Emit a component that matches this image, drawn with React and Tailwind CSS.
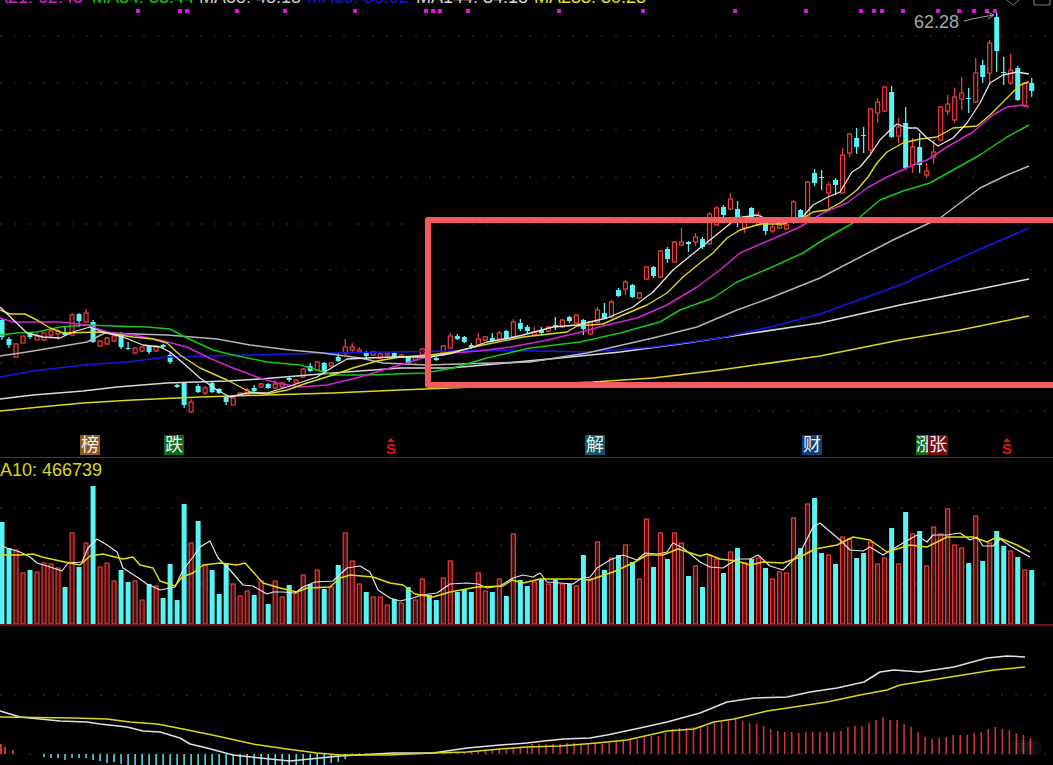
import React from 'react';

const FONT = "font-['Liberation_Sans','Noto_Sans_CJK_SC',sans-serif]";

// x centre of bar i, everything below is in page pixels
const barX = (i) => 7.005 * i + 2;

// colour + top of volume bar
const volume = [
  ['c', 522], ['c', 548], ['r', 550], ['r', 573], ['c', 570], ['r', 572], ['r', 563], ['r', 564], ['r', 568], ['c', 587],
  ['r', 533], ['c', 567], ['r', 543], ['c', 486], ['r', 567], ['r', 563], ['r', 581], ['c', 570], ['c', 582], ['r', 581],
  ['r', 600], ['c', 584], ['r', 586], ['c', 598], ['c', 564], ['c', 600], ['c', 504], ['r', 543], ['c', 521], ['r', 565],
  ['c', 570], ['c', 594], ['c', 563], ['r', 584], ['r', 596], ['r', 591], ['c', 595], ['r', 581], ['c', 604], ['r', 581],
  ['r', 597], ['c', 585], ['r', 593], ['r', 575], ['c', 584], ['r', 570], ['c', 589], ['r', 587], ['c', 565], ['r', 533],
  ['r', 561], ['r', 584], ['c', 592], ['r', 597], ['r', 597], ['r', 605], ['c', 599], ['r', 603], ['c', 587], ['r', 600],
  ['r', 579], ['c', 595], ['c', 600], ['r', 578], ['r', 561], ['c', 592], ['c', 589], ['c', 592], ['r', 573], ['r', 591],
  ['c', 592], ['r', 579], ['c', 596], ['r', 534], ['c', 580], ['c', 586], ['r', 582], ['c', 579], ['r', 584], ['c', 579],
  ['r', 584], ['c', 584], ['r', 586], ['c', 555], ['r', 579], ['r', 542], ['c', 570], ['r', 558], ['c', 555], ['r', 545],
  ['c', 562], ['r', 579], ['r', 519], ['c', 567], ['r', 533], ['c', 559], ['r', 533], ['r', 543], ['c', 576], ['r', 566],
  ['c', 587], ['r', 555], ['r', 559], ['c', 573], ['r', 552], ['c', 548], ['r', 563], ['c', 559], ['r', 558], ['c', 568],
  ['r', 579], ['r', 572], ['r', 573], ['r', 518], ['c', 548], ['r', 504], ['c', 498], ['c', 553], ['r', 555], ['c', 564],
  ['r', 537], ['r', 539], ['c', 558], ['c', 553], ['r', 542], ['r', 564], ['r', 558], ['c', 528], ['r', 564], ['c', 512],
  ['r', 534], ['c', 531], ['r', 566], ['r', 527], ['r', 534], ['r', 509], ['r', 545], ['r', 548], ['c', 563], ['r', 516],
  ['c', 561], ['r', 543], ['c', 531], ['c', 546], ['r', 551], ['c', 557], ['r', 570], ['c', 570],
];

// body top, body bottom, high, low
const candles = [
  [320, 337, 318, 340], [339, 345, 337, 348], [344, 357, 343, 358], [336, 343, 336, 343], [333, 337, 332, 339],
  [336, 340, 333, 340], [333, 340, 333, 341], [331, 335, 329, 337], [331, 334, 329, 340], [332, 335, 327, 336],
  [315, 335, 313, 336], [314, 321, 313, 327], [313, 322, 309, 323], [322, 342, 320, 343], [341, 346, 340, 347],
  [338, 344, 337, 345], [336, 341, 333, 342], [333, 347, 332, 349], [348, 349, 342, 350], [348, 353, 347, 354],
  [347, 351, 346, 352], [346, 352, 346, 354], [346, 351, 345, 352], [345, 347, 344, 349], [355, 362, 352, 364],
  [385, 387, 384, 388], [383, 405, 383, 408], [402, 412, 399, 413], [386, 392, 384, 393], [388, 393, 386, 395],
  [383, 392, 382, 393], [389, 393, 388, 394], [397, 402, 396, 405], [398, 405, 397, 405], [393, 395, 392, 396],
  [390, 395, 388, 396], [388, 391, 385, 392], [384, 387, 383, 388], [384, 388, 383, 389], [384, 388, 380, 389],
  [383, 387, 382, 388], [378, 380, 376, 382], [380, 383, 379, 384], [369, 377, 368, 378], [366, 371, 363, 372],
  [362, 370, 361, 371], [363, 371, 362, 372], [363, 366, 362, 367], [357, 361, 353, 362], [347, 353, 339, 355],
  [347, 350, 343, 352], [350, 352, 347, 353], [352, 356, 351, 359], [352, 355, 351, 356], [354, 358, 353, 359],
  [353, 355, 352, 356], [353, 357, 352, 358], [355, 357, 354, 358], [357, 363, 356, 364], [357, 360, 356, 361],
  [349, 355, 348, 356], [355, 358, 354, 359], [358, 360, 357, 361], [346, 355, 345, 356], [336, 348, 333, 349],
  [336, 339, 334, 340], [337, 342, 336, 343], [345, 347, 343, 349], [339, 345, 333, 346], [337, 340, 336, 341],
  [338, 341, 333, 342], [333, 339, 331, 340], [331, 339, 330, 340], [322, 337, 319, 338], [323, 329, 319, 331],
  [327, 331, 325, 333], [332, 335, 327, 336], [330, 333, 327, 334], [327, 331, 326, 332], [325, 326, 317, 330],
  [320, 327, 319, 328], [317, 321, 316, 323], [315, 323, 314, 324], [320, 329, 319, 335], [322, 334, 321, 335],
  [310, 322, 307, 323], [313, 318, 303, 319], [302, 317, 300, 318], [290, 296, 288, 297], [282, 289, 280, 295],
  [285, 297, 284, 298], [293, 298, 292, 299], [267, 279, 266, 280], [267, 276, 266, 278], [251, 277, 250, 278],
  [249, 259, 247, 263], [242, 262, 241, 263], [242, 245, 228, 246], [242, 244, 241, 252], [237, 242, 233, 246],
  [239, 247, 237, 249], [214, 244, 212, 245], [208, 225, 206, 226], [207, 215, 205, 218], [199, 209, 193, 210],
  [209, 220, 201, 227], [217, 228, 216, 233], [208, 218, 207, 220], [215, 225, 212, 226], [223, 231, 222, 235],
  [227, 231, 225, 233], [225, 228, 224, 229], [225, 229, 224, 230], [202, 222, 200, 224], [210, 218, 209, 219],
  [182, 217, 181, 218], [173, 183, 169, 186], [177, 178, 170, 190], [185, 193, 182, 208], [180, 185, 178, 195],
  [155, 193, 148, 194], [134, 153, 133, 157], [138, 147, 128, 154], [135, 136, 127, 153], [109, 150, 108, 155],
  [102, 113, 98, 123], [87, 111, 86, 112], [92, 137, 86, 138], [127, 136, 118, 143], [123, 168, 107, 170],
  [147, 165, 138, 173], [147, 165, 133, 173], [171, 175, 163, 178], [152, 157, 140, 164], [107, 140, 106, 141],
  [104, 111, 95, 115], [97, 120, 88, 123], [93, 99, 77, 110], [98, 99, 88, 113], [73, 102, 58, 103],
  [65, 77, 60, 83], [43, 73, 40, 83], [17, 51, 13, 72], [72, 73, 57, 85], [70, 83, 54, 85],
  [68, 100, 66, 101], [83, 106, 82, 107], [83, 91, 78, 97],
];

const maLines = [
  ['#d8d81c', 1.5, '0,411 40,407 83,403 133,400 200,397 267,395 333,393 400,390 450,388 593,382 653,378 720,370 820,356 900,340 960,330 1029,316'],
  ['#d8d8d8', 1.6, '0,399 33,395 83,391 117,387 167,383 227,381 260,379 333,373 400,368 450,368 507,363 560,358 620,352 687,343 753,333 820,323 900,305 960,293 1029,279'],
  ['#1616e0', 1.7, '0,377 33,371 83,365 127,362 167,357 250,355 333,353 450,351 487,350 587,352 653,347 720,338 770,327 820,314 900,285 960,258 1029,228'],
  ['#b4b4b4', 1.5, '0,356 27,352 57,347 87,342 105,333 167,335 217,339 250,345 290,350 323,353 360,358 383,363 427,365 460,364 530,362 587,353 653,338 697,327 737,310 770,298 820,278 893,240 940,218 980,188 1007,175 1029,166'],
  ['#14c814', 1.5, '0,335 17,333 37,332 60,327 87,325 113,326 147,327 170,329 187,338 213,350 233,355 267,362 300,365 333,375 367,375 425,373 453,368 487,358 530,348 580,342 620,333 660,322 680,310 713,298 737,282 770,268 803,253 823,240 853,223 880,200 903,191 930,183 953,170 980,155 1007,137 1029,125'],
  ['#d024d0', 1.5, '0,318 13,322 60,322 87,325 107,332 133,335 160,340 187,347 207,357 233,368 257,377 277,383 300,387 327,385 360,377 393,367 430,356 453,353 480,351 510,347 543,341 577,333 607,325 637,318 667,305 697,287 720,270 740,253 770,240 800,227 823,213 847,203 867,188 887,177 913,165 927,160 947,147 973,132 993,115 1007,107 1023,105 1029,107'],
  ['#dcd820', 1.4, '0,310 10,314 25,314 37,320 50,328 63,333 100,332 133,337 153,339 167,343 180,355 200,368 227,380 250,392 267,394 287,390 307,383 333,375 353,368 377,361 400,357 430,355 453,352 483,345 523,337 567,332 577,326 603,324 623,315 647,305 667,293 683,277 700,263 713,253 727,238 740,230 760,224 783,224 805,217 813,212 827,210 840,203 857,190 868,177 877,163 887,152 903,143 920,139 937,137 953,128 977,126 990,115 1007,98 1020,85 1029,82'],
  ['#e4e4e4', 1.3, '0,307 27,333 43,337 60,338 73,332 90,327 103,332 123,337 143,345 160,347 170,352 183,363 200,378 217,390 230,397 247,393 267,393 287,387 317,377 333,367 347,359 367,358 393,357 430,357 453,353 470,348 487,342 510,338 523,335 553,327 577,325 607,318 633,307 653,292 673,270 700,248 720,232 737,218 757,215 777,223 800,220 813,205 828,197 840,192 852,172 860,167 870,155 880,140 890,130 897,124 907,128 917,128 927,138 938,146 953,138 967,123 980,103 990,83 1003,75 1017,72 1029,74'],
];

const volWhite = '0,545 7,548 20,552 30,557 37,563 50,567 62,571 68,563 82,562 88,548 97,539 107,545 117,552 123,568 137,577 147,584 160,590 175,587 183,570 193,557 200,547 210,541 218,558 230,570 243,585 253,586 267,594 273,592 283,592 295,593 303,587 315,582 333,581 347,568 360,566 370,572 378,590 390,598 400,601 413,598 422,595 437,593 450,584 467,583 478,584 487,588 500,586 513,578 523,575 533,577 540,573 547,582 573,584 582,578 590,577 597,568 610,560 623,555 637,560 645,553 658,554 667,552 673,543 683,548 700,562 710,567 723,568 737,559 750,559 758,555 770,566 783,570 800,553 813,527 820,523 840,540 850,550 863,551 870,547 883,555 903,543 917,535 927,542 933,535 947,535 960,533 970,540 977,537 983,546 993,546 1000,539 1012,547 1030,557';
const volYellow = '0,555 20,555 33,554 42,557 60,561 80,565 90,556 103,554 123,559 133,557 140,565 153,568 160,581 175,586 182,577 193,573 203,565 220,563 237,565 245,563 263,583 280,588 297,592 307,588 330,587 340,578 350,575 373,577 390,583 403,585 415,594 433,597 450,592 477,587 503,586 512,580 523,583 540,579 577,579 590,580 613,572 633,563 647,555 663,555 678,549 700,556 707,554 720,559 737,561 750,565 763,562 783,563 800,557 815,549 837,545 853,537 870,540 887,552 900,548 910,545 927,547 947,537 973,537 987,542 997,537 1017,545 1030,552';

const macdWhite = '0,711 10,714 20,717 60,721 87,722 100,724 127,727 143,731 160,732 180,738 190,744 207,748 233,755 260,758 290,761 320,758 340,756 393,753 433,753 467,748 500,745 527,743 544,741 564,739 590,738 607,735 640,728 667,722 700,713 727,702 754,698 787,697 810,692 837,688 864,682 880,672 894,670 920,672 954,667 987,658 1007,656 1025,657';
const macdYellow = '0,717 73,718 107,719 130,722 157,724 183,729 217,736 253,744 287,749 317,753 340,755 387,755 433,753 467,752 500,749 527,747 560,746 597,743 627,740 667,731 694,729 714,722 734,719 767,711 794,707 827,702 860,695 887,690 900,685 944,678 994,670 1025,667';

// MACD stems: tops of the red ones on the right, read off left to right
const macdTops = [744, 744, 744, 744, 744, 743, 743, 744, 743, 743, 744, 743, 742, 740, 740, 739, 737, 736, 736, 733, 729, 728, 728, 727, 727, 726, 723, 722, 721, 719, 721, 723, 724, 726, 729, 731, 732, 732, 733, 732, 732, 732, 732, 732, 731, 727, 726, 726, 723, 720, 717, 720, 720, 724, 727, 732, 737, 739, 738, 737, 735, 735, 735, 733, 732, 729, 727, 729, 730, 733, 735, 738];
const macdCyan = [
  [6, 3], [7, 4], [8, 4], [9, 6], [10, 4], [11, 4], [12, 4], [13, 6], [14, 7], [15, 9], [16, 8], [17, 10],
  ...Array.from({ length: 29 }, (_, k) => [18 + k, 12]),
  [47, 9], [48, 8], [49, 5],
];

const Grid = ({ rows }) =>
  rows.map((y) => (
    <line key={y} x1="0" x2="1053" y1={y} y2={y} stroke="#8c1414" strokeWidth="1.2" strokeDasharray="2 12.3" />
  ));

const Line = ({ color, width, points }) => (
  <polyline points={points} fill="none" stroke={color} strokeWidth={width} strokeLinejoin="round" />
);

const Candle = ({ i }) => {
  const [top, bot, hi, lo] = candles[i];
  const x = barX(i);
  const up = volume[i][0] === 'r';
  const color = up ? '#e83e3e' : '#55f5f5';
  return (
    <g>
      <line x1={x} x2={x} y1={hi} y2={lo} stroke={color} strokeWidth="1.3" />
      {up ? (
        <rect x={x - 2} y={top} width="4" height={Math.max(bot - top, 1)} fill="#1c0404" stroke={color} strokeWidth="1.2" />
      ) : (
        <rect x={x - 2.5} y={top} width="5" height={Math.max(bot - top, 1)} fill={color} />
      )}
    </g>
  );
};

const VolBar = ({ i }) => {
  const [kind, top] = volume[i];
  const x = barX(i);
  if (kind === 'c') return <rect x={x - 2.5} y={top} width="5" height={624 - top} fill="#55f5f5" />;
  return <rect x={x - 2} y={top} width="4" height={624 - top} fill="#4c1010" stroke="#e83c3c" strokeWidth="1.2" />;
};

const SMark = () => (
  <div className="flex flex-col items-center w-[12px] pt-[3px] text-[#e01212]">
    <div className="w-0 h-0 border-x-[4px] border-x-transparent border-b-[4px] border-b-[#e01212]" />
    <div className="text-[15px] leading-[13px] font-bold">S</div>
  </div>
);

const Badge = ({ className, children }) => (
  <div className={`h-[20px] flex items-center text-[18px] leading-none text-[#eeeeee] overflow-hidden ${className}`}>
    {children}
  </div>
);

const App = () => {
  return (
    <div className={`w-[1053px] h-[765px] overflow-hidden bg-black flex flex-col relative ${FONT}`}>
      {/* K line panel */}
      <div className="relative h-[458px] shrink-0 flex flex-col border-b border-[#a01010]">
        <svg className="block w-full h-[435px] shrink-0" viewBox="0 0 1053 435">
          <Grid rows={[36, 83, 130, 177, 224, 270, 317, 363, 411]} />
          {candles.map((_, i) => (
            <Candle key={i} i={i} />
          ))}
          {maLines.map(([color, width, points]) => (
            <Line key={color} color={color} width={width} points={points} />
          ))}
          {[138, 180, 187, 237, 285, 355, 426, 433, 440, 468, 559, 643, 735, 806, 861, 874, 882, 903, 938, 959, 974, 987, 995].map((x) => (
            <rect key={x} x={x - 2} y="9" width="4" height="4" fill="#e010e0" />
          ))}
          <path d="M964 21 C975 18 984 17 993 15 M987 12 L994 15 L988 19" fill="none" stroke="#a8a8a8" strokeWidth="1" />
          <path d="M1007 0 L1013 5 L1019 0" fill="none" stroke="#777777" strokeWidth="1" />
          <path d="M1034 0 V3 Q1034 5 1036 5 H1048 Q1050 5 1050 3 V0" fill="none" stroke="#777777" strokeWidth="1.2" />
        </svg>

        {/* signal badges under the candles */}
        <div className="flex pl-[80px]">
          <Badge className="w-[20px] justify-center bg-[#8a5a20]">榜</Badge>
          <Badge className="w-[20px] justify-center ml-[64px] bg-[#0c6a14]">跌</Badge>
          <div className="ml-[201px]">
            <SMark />
          </div>
          <Badge className="w-[20px] justify-center ml-[188px] bg-[#0c5a66]">解</Badge>
          <Badge className="w-[20px] justify-center ml-[197px] bg-[#143f78]">财</Badge>
          <Badge className="w-[12px] justify-start ml-[94px] bg-[#0c6a14]">涨</Badge>
          <Badge className="w-[20px] justify-center bg-[#760c0c]">张</Badge>
          <div className="ml-[53px]">
            <SMark />
          </div>
        </div>

        {/* MA legend, cut off by the top edge */}
        <div className="absolute left-0 top-0 w-full h-[4px] overflow-hidden">
          <div className="flex -mt-[12px] text-[18px] leading-none whitespace-nowrap">
            <div className="w-[92px] flex justify-end text-[#d024d0] pr-[9px]">MA21: 62.45</div>
            <div className="w-[107px] text-[#14c814]">MA34: 55.44</div>
            <div className="w-[108px] text-[#c8c8c8]">MA55: 48.18</div>
            <div className="w-[109px] text-[#1616e0]">MA89: 38.02</div>
            <div className="w-[118px] text-[#d8d8d8]">MA144: 34.18</div>
            <div className="text-[#e4e41c]">MA233: 30.23</div>
          </div>
        </div>

        <div className="absolute left-[914px] top-[13px] text-[18px] leading-[18px] text-[#a8a8a8]">62.28</div>
      </div>

      {/* volume panel */}
      <div className="relative h-[168px] shrink-0 border-b-2 border-[#7a0e0e]">
        <svg className="block w-full h-[166px]" viewBox="0 458 1053 166">
          <Grid rows={[508, 545, 584]} />
          {volume.map((_, i) => (
            <VolBar key={i} i={i} />
          ))}
          <Line color="#e4e4e4" width={1.2} points={volWhite} />
          <Line color="#e0dc10" width={1.5} points={volYellow} />
        </svg>
        <div className="absolute left-0 top-[3px] text-[18px] leading-[18px] text-[#d8d81c]">A10: 466739</div>
      </div>

      {/* MACD panel */}
      <div className="relative flex-1">
        <svg className="block w-full h-[139px]" viewBox="0 626 1053 139">
          <Grid rows={[695, 754]} />
          <line x1="1" x2="1" y1="744" y2="754" stroke="#c83434" strokeWidth="2" />
          <line x1="5" x2="5" y1="747" y2="754" stroke="#c83434" strokeWidth="2" />
          <line x1="13" x2="13" y1="750" y2="754" stroke="#c83434" strokeWidth="2" />
          {macdCyan.map(([i, h]) => (
            <line key={i} x1={barX(i)} x2={barX(i)} y1="754" y2={754 + h} stroke="#58d8e0" strokeWidth="1.6" />
          ))}
          {macdTops.map((top, k) => {
            const x = 532 + 7.02 * k;
            return <line key={k} x1={x} x2={x} y1={top} y2="754" stroke="#cc3434" strokeWidth="1.6" />;
          })}
          {Array.from({ length: 26 }, (_, k) => {
            const x = barX(50 + k);
            const h = k < 14 ? 1 : (k - 13) * 0.7;
            return <line key={k} x1={x} x2={x} y1={754 - h} y2="754" stroke="#cc3434" strokeWidth="1.6" />;
          })}
          <Line color="#e0e0e0" width={1.5} points={macdWhite} />
          <Line color="#d8d81c" width={1.5} points={macdYellow} />
        </svg>
        <div className="absolute left-[1010px] top-[114px] w-[32px] h-[15px] rounded-full bg-white/5 text-[10px] leading-[15px] text-center text-white/10">
          切片
        </div>
      </div>

      {/* highlight box drawn over the chart, right side runs off the page */}
      <div className="absolute left-[425px] top-[217px] w-[650px] h-[171px] border-[6px] border-[#f25b5b] rounded-[3px]" />
    </div>
  );
};

export default App;
